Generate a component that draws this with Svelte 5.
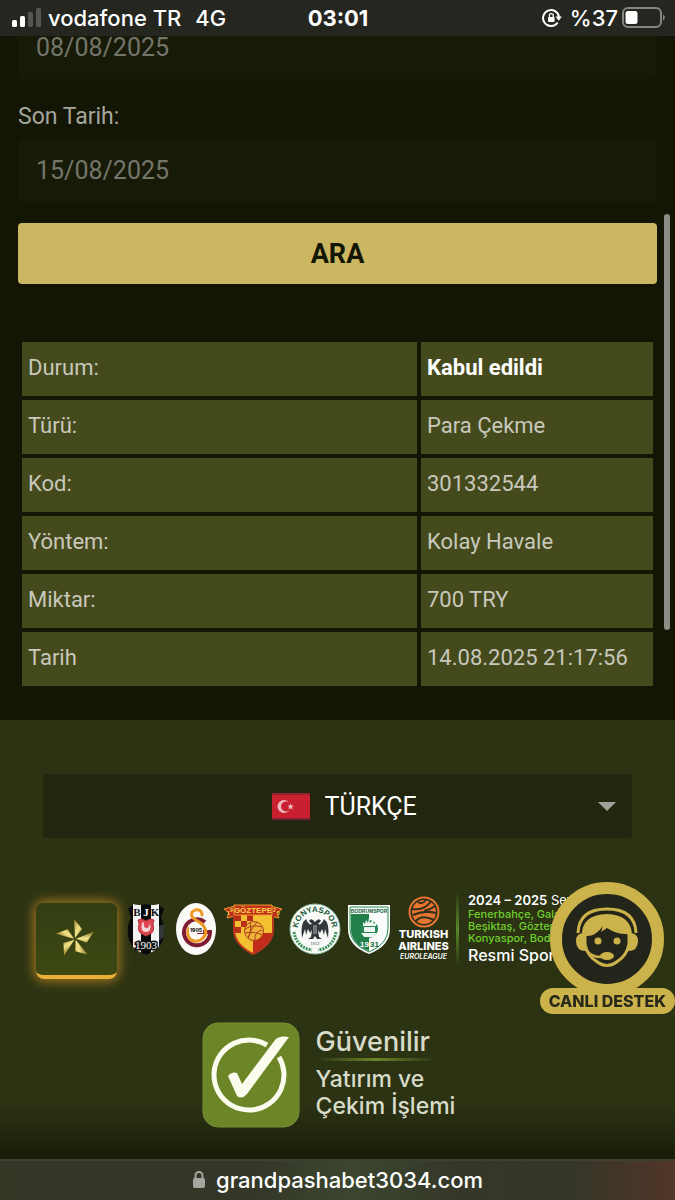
<script>
  let startDate = '08/08/2025';
  let endDate = '15/08/2025';
  let language = 'tr';

  const rows = [
    { label: 'Durum:', value: 'Kabul edildi', strong: true },
    { label: 'Türü:', value: 'Para Çekme' },
    { label: 'Kod:', value: '301332544' },
    { label: 'Yöntem:', value: 'Kolay Havale' },
    { label: 'Miktar:', value: '700 TRY' },
    { label: 'Tarih', value: '14.08.2025 21:17:56' }
  ];

  const blades = [0, 72, 144, 216, 288];
</script>

<div class="status-bar">
  <div class="carrier">
    <svg width="32" height="20" viewBox="0 0 32 20" aria-hidden="true">
      <rect x="2" y="12" width="5" height="7" rx="1.5" fill="#fff" />
      <rect x="10" y="8" width="5" height="11" rx="1.5" fill="#fff" />
      <rect x="18" y="4" width="5" height="15" rx="1.5" fill="#555650" />
      <rect x="26" y="0" width="5" height="19" rx="1.5" fill="#555650" />
    </svg>
    <span>vodafone TR</span>
    <span class="network">4G</span>
  </div>
  <div class="clock">03:01</div>
  <div class="power">
    <svg width="20" height="20" viewBox="0 0 20 20" aria-hidden="true">
      <path d="M15.2 15.2A8 8 0 1 1 17 9" fill="none" stroke="#fff" stroke-width="2" stroke-linecap="round" />
      <path d="M13.4 8.4h6.4l-3 4.4z" fill="#fff" />
      <rect x="6" y="9" width="6.6" height="5" rx="1" fill="#fff" />
      <path d="M7.4 9.4V7.6a1.9 1.9 0 0 1 3.8 0v1.8" fill="none" stroke="#fff" stroke-width="1.3" />
    </svg>
    <span>%37</span>
    <svg width="44" height="22" viewBox="0 0 44 22" aria-hidden="true">
      <rect x="1" y="1" width="38" height="19" rx="5" fill="none" stroke="#85867f" stroke-width="2" />
      <rect x="3.5" y="4" width="12" height="13" rx="2.5" fill="#fff" />
      <path d="M41 7.5c2.4 1 2.4 5 0 6z" fill="#85867f" />
    </svg>
  </div>
</div>

<main>
  <input type="text" class="date" aria-label="Başlangıç" bind:value={startDate} />
  <label for="end-date">Son Tarih:</label>
  <input type="text" class="date" id="end-date" bind:value={endDate} />
  <button class="search" type="button">ARA</button>

  <table>
    <tbody>
      {#each rows as row}
        <tr>
          <th scope="row">{row.label}</th>
          <td class:strong={row.strong}>{row.value}</td>
        </tr>
      {/each}
    </tbody>
  </table>
</main>

<footer>
  <div class="language">
    <svg width="38" height="27" viewBox="0 0 38 27" aria-hidden="true">
      <rect width="38" height="27" fill="#c8202f" />
      <rect width="38" height="2" fill="#8d2430" />
      <rect y="25" width="38" height="2" fill="#7d2036" />
      <circle cx="12" cy="13.5" r="6.5" fill="#f0b9bd" />
      <circle cx="14" cy="13.5" r="5" fill="#c8202f" />
      <path d="M18.5 10.5l1 2 2.2.2-1.6 1.5.5 2.2-2-1.1-2 1 .4-2.2-1.5-1.5 2.1-.2z" fill="#f0b9bd" />
    </svg>
    <select aria-label="Dil" bind:value={language}>
      <option value="tr">TÜRKÇE</option>
    </select>
    <span class="arrow"></span>
  </div>

  <div class="sponsors">
    <button class="star-card" type="button" aria-label="Menu">
      <svg width="40" height="40" viewBox="-20 -20 40 40" aria-hidden="true">
        <defs>
          <linearGradient id="gold" x1="0" y1="0" x2="1" y2="1">
            <stop offset="0" stop-color="#8a7423" />
            <stop offset="0.5" stop-color="#f4e58a" />
            <stop offset="1" stop-color="#a88f35" />
          </linearGradient>
        </defs>
        {#each blades as angle}
          <path d="M0 -1L-1 -20L7 -10Z" fill="url(#gold)" transform="rotate({angle})" />
        {/each}
      </svg>
    </button>

    <svg width="46" height="56" viewBox="0 0 46 56" role="img" aria-label="Beşiktaş">
      <clipPath id="bjk-shield">
        <path d="M5 7Q9 6 10 3Q17 5 23 3Q29 5 36 3Q37 6 41 7L38 17Q42 24 41 33Q40 45 31 50L23 54L15 50Q6 45 5 33Q4 24 8 17Z" />
      </clipPath>
      <g clip-path="url(#bjk-shield)">
        <rect width="46" height="56" fill="#090a0b" />
        <path d="M10 0h8v56h-8zM28 0h8v56h-8z" fill="#f3f3f1" />
        <path d="M36 25Q42 23 46 20V36Q40 35 36 40Z" fill="#34383b" />
      </g>
      <path d="M15 19L19 18L23 20L27 18L31 19L30 23Q32 31 27 33L23 35L19 33Q14 31 16 23Z" fill="#dc4651" stroke="#b9303c" />
      <path d="M19 22Q17 31 23 31Q29 31 27 22Q26 28 23 27Q20 26 21 21Z" fill="#f4d5d5" />
      <g font-family="'Liberation Serif', serif" font-size="11" font-weight="700" text-anchor="middle">
        <text x="14" y="15" fill="#111">B</text>
        <text x="23" y="15" fill="#fff">J</text>
        <text x="32" y="15" fill="#111">K</text>
      </g>
      <text x="23" y="48" font-family="'Liberation Serif', serif" font-size="11" text-anchor="middle" fill="#fff" stroke="#111" stroke-width="3" paint-order="stroke">1903</text>
    </svg>

    <svg width="42" height="56" viewBox="0 0 42 56" role="img" aria-label="Galatasaray">
      <ellipse cx="21" cy="28" rx="20" ry="26" fill="#fbfaf7" />
      <path d="M30 21A13 13 0 1 0 35 31H22" fill="none" stroke="#7e1c34" stroke-width="4" />
      <path d="M27 14Q27 8 20 9Q14 12 18 17L27 23Q34 31 28 37Q22 43 15 38Q11 33 14 27" fill="none" stroke="#ee9824" stroke-width="3" stroke-linecap="round" />
      <rect x="14" y="26" width="14" height="6" fill="#fbfaf7" />
      <text x="21" y="31" font-family="Inter, sans-serif" font-size="5" font-weight="800" text-anchor="middle" fill="#222">1905</text>
    </svg>

    <svg width="60" height="56" viewBox="0 0 60 56" role="img" aria-label="Göztepe">
      <clipPath id="goz-shield">
        <path d="M11 11H50V30Q49 44 30 53Q12 44 11 30Z" />
      </clipPath>
      <path d="M1 8L12 5V15L4 17L6 12ZM59 8L48 5V15L56 17L54 12Z" fill="#bd2d1b" stroke="#e79b2c" stroke-width="1" />
      <g clip-path="url(#goz-shield)">
        <rect width="60" height="56" fill="#f5bf32" />
        <path d="M12 14h6v6h-6zM24 14h6v6h-6zM18 20h6v6h-6zM12 26h6v6h-6zM24 26h6v6h-6z" fill="#b92e1b" />
        <path d="M30 32H50V56H30Z" fill="#c22c1a" />
      </g>
      <path d="M11 11H50V30Q49 44 30 53Q12 44 11 30Z" fill="none" stroke="#b9361e" stroke-width="2" />
      <circle cx="31" cy="30" r="9.5" fill="#f0b138" stroke="#a8421c" />
      <path d="M22 28Q30 23 39 26M22 32Q32 30 39 34M25 37Q28 27 34 21M32 39Q31 31 39 29M27 21Q29 31 25 37" fill="none" stroke="#a8421c" />
      <path d="M11 4H49V14H11Z" fill="#c5301c" stroke="#e79b2c" />
      <text x="30" y="12" font-family="'Liberation Sans', sans-serif" font-size="8" font-weight="700" text-anchor="middle" fill="#f8d548">GÖZTEPE</text>
      <g font-family="'Liberation Sans', sans-serif" font-size="5" font-weight="700" fill="#f8d548">
        <text x="4" y="14">1</text>
        <text x="7" y="11">9</text>
        <text x="50" y="11">2</text>
        <text x="54" y="14">5</text>
      </g>
    </svg>

    <svg width="52" height="56" viewBox="0 0 52 56" role="img" aria-label="Konyaspor">
      <defs>
        <path id="konya-arc" d="M9 28A17 17 0 0 1 43 28" />
      </defs>
      <circle cx="26" cy="28" r="25" fill="#f8faf7" stroke="#8fbf9f" />
      <text font-family="'Liberation Sans', sans-serif" font-size="8" font-weight="700" text-anchor="middle" fill="#1c5b37">
        <textPath href="#konya-arc" startOffset="50%">KONYASPOR</textPath>
      </text>
      <path d="M5 31Q8 47 23 49M47 31Q44 47 29 49" fill="none" stroke="#3a9158" stroke-width="3" stroke-dasharray="2 1" />
      <path d="M26 21Q22 16 20 20L23 23Q20 25 17 18Q11 22 13 37L16 28L17 34L19 28L21 32L23 29L22 36L19 38H24L26 35L28 38H33L30 36L29 29L31 32L33 28L35 34L36 28L39 37Q41 22 35 18Q32 25 29 23L32 20Q30 16 26 21Z" fill="#33363a" />
      <path d="M24 24h4v9h-4z" fill="#72767a" />
      <text x="26" y="44" font-family="'Liberation Sans', sans-serif" font-size="4" text-anchor="middle" fill="#555">1922</text>
    </svg>

    <svg width="44" height="56" viewBox="1 0 44 56" role="img" aria-label="Bodrumspor">
      <path d="M2 4H44V28Q44 45 23 53Q2 45 2 28Z" fill="#fff" />
      <path d="M4 6H42V28Q42 43 23 51Q4 43 4 28Z" fill="#fafcfb" stroke="#24884f" />
      <path d="M5 13H23V50Q5 43 5 28Z" fill="#218049" />
      <text x="23" y="12" font-family="'Liberation Sans', sans-serif" font-size="5" font-weight="700" text-anchor="middle" fill="#176238">BODRUMSPOR</text>
      <circle cx="23" cy="28" r="9" fill="#258750" />
      <path d="M17 25V21L19 23L20 19L22 22L23 17L24 22L27 19L28 23L30 21V25ZM18 26H29V31H18ZM15 32H31L28 36H18Z" fill="#f1f8f3" />
      <text x="14" y="46" font-family="'Liberation Sans', sans-serif" font-size="8" font-weight="700" fill="#fff">19</text>
      <text x="24" y="46" font-family="'Liberation Sans', sans-serif" font-size="8" font-weight="700" fill="#176238">31</text>
    </svg>

    <div class="airline">
      <svg width="32" height="32" viewBox="0 0 32 32" aria-hidden="true">
        <circle cx="16" cy="16" r="14.5" fill="#292d16" stroke="#e87632" stroke-width="2" />
        <circle cx="16" cy="16" r="12" fill="#e87632" />
        <path d="M4 13Q17 15 23 5M5 19Q16 14 28 17M8 25Q14 18 26 24M16 15Q22 14 27 10M10 6Q14 9 18 4" fill="none" stroke="#342f19" stroke-width="2" />
      </svg>
      <strong>
        <span>TURKISH</span>
        <span>AIRLINES</span>
      </strong>
      <em>EUROLEAGUE</em>
    </div>

    <span class="divider"></span>

    <div class="season">
      <p><b>2024 – 2025</b> Sez</p>
      <p class="clubs">Fenerbahçe, Galat</p>
      <p class="clubs">Beşiktaş, Göztepe</p>
      <p class="clubs">Konyaspor, Bodru</p>
      <p class="official">Resmi Spon</p>
    </div>
  </div>

  <div class="trust">
    <svg width="98" height="106" viewBox="0 0 98 106" aria-hidden="true">
      <rect x="1" y="1" width="96" height="104" rx="15" fill="#6b8527" stroke="#778f37" />
      <path d="M65 23A35 35 0 1 0 77 35" fill="none" stroke="#fbfced" stroke-width="5" />
      <path d="M26 54Q30 49 35 51L40 62L73 18Q77 13 87 15L45 72Q40 78 35 74Z" fill="#fbfced" />
    </svg>
    <div class="trust-text">
      <p class="trust-title">Güvenilir</p>
      <span class="trust-line"></span>
      <p>Yatırım ve<br />Çekim İşlemi</p>
    </div>
  </div>
</footer>

<span class="scroll-thumb"></span>

<button class="support" type="button">
  <svg width="114" height="114" viewBox="0 0 114 114" aria-hidden="true">
    <circle cx="57" cy="57" r="51" fill="#23251a" stroke="#ccb24a" stroke-width="12" />
    <path d="M28 51Q29 27 57 27Q85 27 86 51" fill="none" stroke="#ccb24a" stroke-width="3" />
    <path d="M32 54Q31 33 57 32Q82 33 82 54L76 52Q66 52 57 46L51 50L53 44Q46 54 37 54Z" fill="#ccb24a" />
    <path d="M35 50V62Q37 73 46 79Q57 88 68 79Q77 73 79 62V50" fill="none" stroke="#ccb24a" stroke-width="3" />
    <path d="M36 51Q26 50 26 59Q26 69 36 69ZM78 51Q88 50 88 59Q88 69 78 69Z" fill="#ccb24a" />
    <circle cx="48" cy="59" r="3.5" fill="#ccb24a" />
    <circle cx="67" cy="59" r="3.5" fill="#ccb24a" />
    <path d="M36 68Q42 76 54 75" fill="none" stroke="#ccb24a" stroke-width="2.5" />
    <ellipse cx="57" cy="74" rx="7" ry="4" fill="#ccb24a" />
  </svg>
  <span>CANLI DESTEK</span>
</button>

<div class="address-bar">
  <svg width="14" height="20" viewBox="0 0 14 20" aria-hidden="true">
    <rect x="1" y="8" width="12" height="10" rx="2" fill="#a5a79f" />
    <path d="M3.5 9V5.5a3.5 3.5 0 0 1 7 0V9" fill="none" stroke="#a5a79f" stroke-width="2" />
  </svg>
  <span>grandpashabet3034.com</span>
</div>

<style>
  :global(body) {
    background: #2c3313;
    font-family: Roboto, sans-serif;
    color: #c8c8bc;
  }

  p {
    margin: 0;
  }

  svg {
    display: block;
    flex-shrink: 0;
  }

  .status-bar {
    position: fixed;
    top: 0;
    left: 0;
    right: 0;
    z-index: 10;
    display: grid;
    grid-template-columns: 1fr auto 1fr;
    align-items: center;
    height: 36px;
    padding: 0 9px 0 10px;
    box-sizing: border-box;
    background: #25261f;
    color: #fff;
    font-family: Inter, sans-serif;
    font-size: 22px;
    font-weight: 500;
  }

  .carrier,
  .power {
    display: flex;
    align-items: center;
    gap: 6px;
  }

  .network {
    margin-left: 8px;
  }

  .power {
    justify-content: flex-end;
    gap: 4px;
  }

  .power span {
    margin-left: 4px;
  }

  .clock {
    font-weight: 700;
  }

  main {
    padding: 17px 18px 30px;
    background: #131505;
  }

  .date {
    display: block;
    width: 100%;
    height: 62px;
    box-sizing: border-box;
    padding: 0 18px 2px;
    border: 0;
    border-radius: 4px;
    background: #181a08;
    color: #74756a;
    font-family: inherit;
    font-size: 25px;
  }

  label {
    display: block;
    padding: 24px 0 9px;
    font-size: 23px;
    line-height: 28px;
    color: #a6a69d;
  }

  .search {
    display: block;
    width: 100%;
    height: 61px;
    margin: 21px 0 54px;
    border: 0;
    border-radius: 4px;
    background: #cbb661;
    color: #131505;
    font-family: inherit;
    font-size: 27px;
    font-weight: 700;
  }

  table {
    width: 100%;
    border-collapse: separate;
    border-spacing: 4px;
    table-layout: fixed;
  }

  th,
  td {
    height: 54px;
    box-sizing: border-box;
    padding: 0 6px 4px;
    background: #454a1d;
    font-size: 22px;
    font-weight: 400;
    text-align: left;
  }

  th {
    width: 63%;
  }

  .strong {
    color: #fff;
    font-weight: 700;
  }

  footer {
    padding: 54px 0 72px;
    background: linear-gradient(#2c3313 80%, #171b08 92%);
  }

  .language {
    position: relative;
    display: flex;
    align-items: center;
    justify-content: center;
    gap: 15px;
    height: 64px;
    margin: 0 43px 53px;
    padding-left: 14px;
    border-radius: 4px;
    background: #23260f;
  }

  select {
    appearance: none;
    padding: 0;
    border: 0;
    background: none;
    color: #fff;
    font-family: inherit;
    font-size: 25px;
  }

  .arrow {
    position: absolute;
    right: 16px;
    top: 28px;
    border: 9px solid transparent;
    border-top-color: #a0a198;
    border-bottom: 0;
    pointer-events: none;
  }

  .sponsors {
    display: flex;
    align-items: center;
    gap: 6px;
    height: 76px;
    padding-left: 36px;
    white-space: nowrap;
  }

  .star-card {
    display: flex;
    align-items: center;
    justify-content: center;
    flex-shrink: 0;
    width: 81px;
    height: 76px;
    margin-top: 24px;
    padding: 0 4px 0 0;
    border: 0;
    border-bottom: 4px solid #edae36;
    border-radius: 8px;
    background: linear-gradient(#333d12, #3d4913);
    box-shadow: 0 0 12px 2px #a77b22;
  }

  .airline {
    display: flex;
    flex-direction: column;
    align-items: center;
    width: 53px;
    color: #fff;
    font-family: Inter, sans-serif;
  }

  .airline strong span {
    display: block;
    font-size: 11px;
    line-height: 12px;
    font-weight: 800;
    text-align: center;
  }

  .airline em {
    font-size: 7px;
    line-height: 10px;
    font-weight: 600;
  }

  .divider {
    width: 3px;
    height: 74px;
    background: linear-gradient(transparent, #5b8a2b, transparent);
  }

  .season {
    padding-left: 3px;
    color: #fff;
    font-family: Inter, sans-serif;
    font-size: 13px;
    line-height: 15px;
  }

  .season b {
    font-weight: 600;
  }

  .season .clubs {
    color: #6fce2d;
    font-size: 11px;
    line-height: 12px;
    font-weight: 500;
  }

  .season .official {
    font-size: 16px;
    line-height: 22px;
    font-weight: 500;
  }

  .trust {
    display: flex;
    justify-content: center;
    gap: 16px;
    margin-top: 55px;
    padding-right: 18px;
  }

  .trust-text {
    color: #d8dbca;
    font-family: Inter, sans-serif;
    font-size: 23px;
    line-height: 27px;
    font-weight: 500;
  }

  .trust-text .trust-title {
    padding-top: 4px;
    font-size: 27px;
    line-height: 32px;
  }

  .trust-line {
    display: block;
    width: 120px;
    height: 3px;
    margin-bottom: 5px;
    background: linear-gradient(90deg, transparent, #6b8527, transparent);
  }

  .scroll-thumb {
    position: fixed;
    top: 214px;
    right: 5px;
    z-index: 5;
    width: 6px;
    height: 416px;
    border-radius: 3px;
    background: #8c8d84;
  }

  .support {
    position: fixed;
    right: 0;
    bottom: 186px;
    z-index: 5;
    display: flex;
    flex-direction: column;
    align-items: center;
    padding: 0;
    border: 0;
    background: none;
    font-family: Inter, sans-serif;
  }

  .support span {
    margin-top: -8px;
    padding: 0 9px;
    border-radius: 13px;
    background: #ccb24a;
    color: #292a1a;
    font-size: 16px;
    line-height: 26px;
    font-weight: 800;
  }

  .address-bar {
    position: fixed;
    left: 0;
    right: 0;
    bottom: 0;
    z-index: 10;
    display: flex;
    align-items: center;
    justify-content: center;
    gap: 10px;
    height: 41px;
    box-sizing: border-box;
    padding-bottom: 2px;
    border-top: 2px solid #3d4033;
    background: linear-gradient(90deg, #343626 0%, #343728 38%, #3c462f 52%, #343728 68%, #363628 85%, #513528 100%);
    color: #fff;
    font-family: Inter, sans-serif;
    font-size: 22px;
    font-weight: 500;
  }
</style>
